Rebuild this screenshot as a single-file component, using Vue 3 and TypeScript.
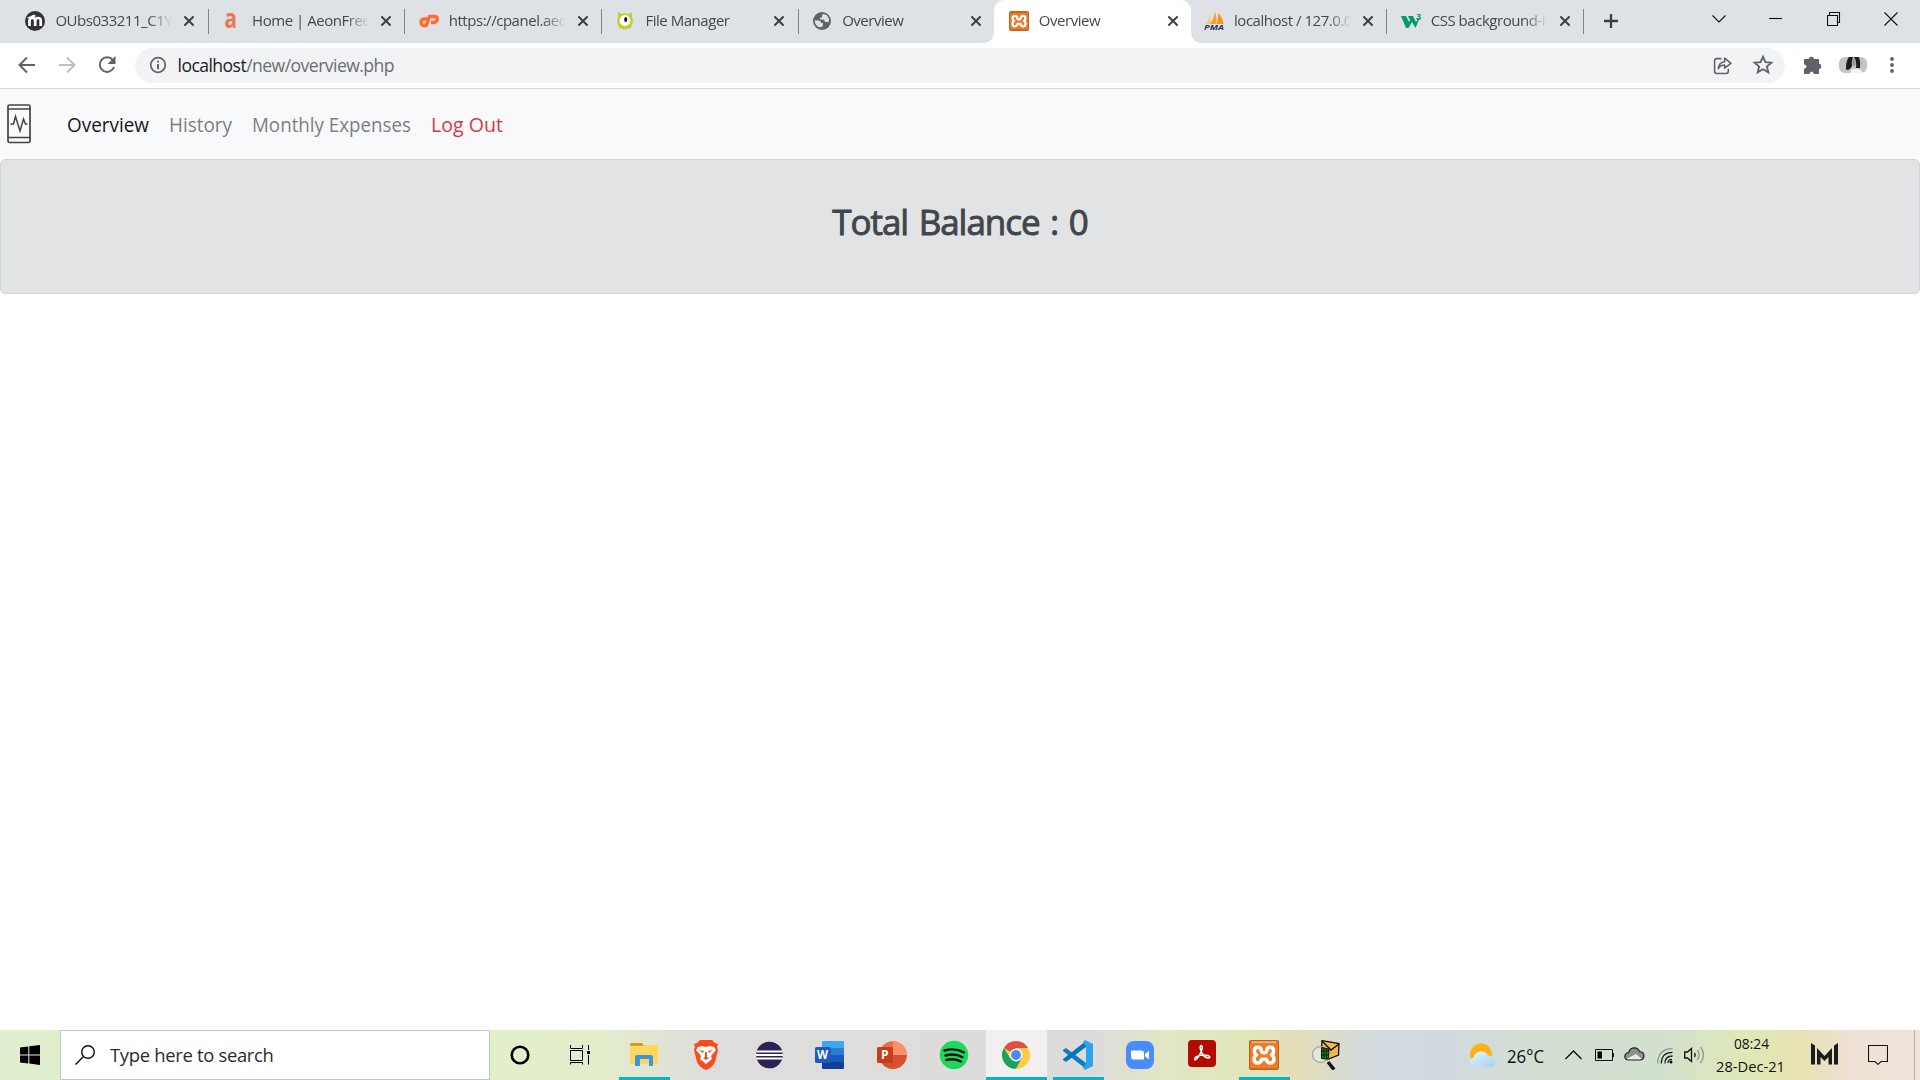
<script setup lang="ts">
interface Tab {
  title: string
  icon: string
  active?: boolean
  separator?: boolean
}

const tabs: Tab[] = [
  { title: 'OUbs033211_C1Y', icon: 'moodle', separator: true },
  { title: 'Home | AeonFree', icon: 'aeon', separator: true },
  { title: 'https://cpanel.aeo', icon: 'cpanel', separator: true },
  { title: 'File Manager', icon: 'monster', separator: true },
  { title: 'Overview', icon: 'globe' },
  { title: 'Overview', icon: 'xampp', active: true },
  { title: 'localhost / 127.0.0', icon: 'pma', separator: true },
  { title: 'CSS background-i', icon: 'w3', separator: true },
]

const links = [
  { label: 'Overview', kind: 'current', width: 82 },
  { label: 'History', kind: '', width: 63 },
  { label: 'Monthly Expenses', kind: '', width: 159 },
  { label: 'Log Out', kind: 'danger', width: 72 },
]
</script>

<template>
  <div class="screen">
    <header class="tabstrip">
      <div v-for="(tab, i) in tabs" :key="i" class="tab" :class="{ active: tab.active, sep: tab.separator }">
        <svg class="favicon" viewBox="0 0 20 20">
          <g v-if="tab.icon === 'moodle'">
            <circle cx="10" cy="10" r="10" fill="#333" />
            <path d="M4.500 15V9.500Q4.500 7 7.300 7T10.200 9.500V15M10.200 9.500Q10.200 7 13 7T15.700 9.500V15" fill="none" stroke="#fff" stroke-width="2.700" />
            <path d="M1.500 7L9 3.500L11 5L7 7.500Z" fill="#fff" />
          </g>
          <text v-else-if="tab.icon === 'aeon'" x="2.500" y="16.500" class="aeon" textLength="12.500" lengthAdjust="spacingAndGlyphs">a</text>
          <g v-else-if="tab.icon === 'cpanel'" fill="none" stroke="#ff6c2c" stroke-width="3.300" stroke-linejoin="round">
            <path d="M8.500 8H5.500Q2 8 2 11.300T5.500 14.500H7.500L10.500 5.500H15Q18.300 5.500 18.300 8.300T15 11.500H12" />
          </g>
          <g v-else-if="tab.icon === 'monster'">
            <path d="M3 1L6 3Q10 1.500 14 3L17 1V6Q19 10 16.500 15L15 18L13 17L11.500 19L10 17.500L8.500 19L7 17L5 18L3.500 15Q1 10 3 6Z" fill="#c3cf3a" />
            <circle cx="10" cy="9.500" r="5.400" fill="#fff" /><ellipse cx="10.700" cy="8.500" rx="1.500" ry="2.500" fill="#111" />
          </g>
          <g v-else-if="tab.icon === 'globe'">
            <circle cx="10" cy="10" r="9" fill="#5f6368" />
            <path d="M2.600 9.500H7Q9 9.500 9 12H11V15Q8 17.300 5.500 15.500Q2.800 13.500 2.600 9.500ZM11 3Q9 5 10.500 6.500H8V8.500H11Q13 9 13 11H16.800Q18 8 15.500 5Q13.500 3 11 3Z" fill="#dee1e6" />
          </g>
          <g v-else-if="tab.icon === 'xampp'">
            <rect width="20" height="20" rx="2" fill="#c8641d" /><rect x="1" y="2" width="18" height="16.500" rx="1" fill="#ee7a26" />
            <path d="M8.300 7.300Q8 4.800 6 4.800Q3.600 4.800 3.600 7.300Q3.600 9.200 5 10Q3.400 10.800 3.400 12.800Q3.400 15.300 6 15.300Q8 15.300 8.500 12.800H11.500Q12 15.300 14 15.300Q16.600 15.300 16.600 12.800Q16.600 10.800 15 10Q16.400 9.200 16.400 7.300Q16.400 4.800 14 4.800Q12 4.800 11.700 7.300Q11.500 8.500 10 8.500T8.300 7.300Z" fill="none" stroke="#fff" stroke-width="2.300" stroke-linejoin="round" />
          </g>
          <g v-else-if="tab.icon === 'pma'">
            <path d="M1 13Q5 10 5.500 3L7.500 13Z" fill="#fbc785" /><path d="M6 13Q10 8 11 0Q13 8 12.500 13Z" fill="#f8a13a" /><path d="M13 13L14.500 2Q19 8 19.500 13Z" fill="#f7931e" />
            <text x="0" y="19" class="pma" textLength="20" lengthAdjust="spacingAndGlyphs">PMA</text>
          </g>
          <g v-else>
            <path d="M0 5H5L8 11L9 9L7 5H12L15 11L16.500 9L15 7H18.500L17 11L14.500 17L11 11L7.500 17H5Z" fill="#059b6c" />
            <text x="15.500" y="9" class="three">3</text>
          </g>
        </svg>
        <span class="tab-title">{{ tab.title }}</span>
        <svg class="close" viewBox="0 0 10 10"><path d="M.4.4L9.600 9.600M9.600.4L.4 9.600" stroke="#3c4043" stroke-width="2" /></svg>
      </div>
      <svg class="plus" viewBox="0 0 14 14"><path d="M7 0V14M0 7H14" stroke="#3c4043" stroke-width="2.300" /></svg>
      <div class="window-controls">
        <svg viewBox="0 0 14 14"><path d="M.5 3.500L7 10L13.500 3.500" /></svg>
        <svg viewBox="0 0 14 14"><path d="M0 6.500H13" /></svg>
        <svg viewBox="0 0 14 14"><path d="M.5 3.500H10.500V13.500H.5ZM2.500 3.500V.5H12.500V10.500H10.500" /></svg>
        <svg viewBox="0 0 14 14"><path d="M.5.5L13.500 13.500M13.500.5L.5 13.500" /></svg>
      </div>
    </header>

    <div class="toolbar">
      <div class="history">
        <svg viewBox="0 0 18 18"><path d="M17 9H2M9 1.500L1.500 9L9 16.500" fill="none" stroke="#5f6368" stroke-width="2" /></svg>
        <svg viewBox="0 0 18 18"><path d="M1 9H16M9 1.500L16.500 9L9 16.500" fill="none" stroke="#bdbfc2" stroke-width="2" /></svg>
        <svg viewBox="0 0 18 18"><path d="M14.800 4A7.300 7.300 0 1 0 16 11" fill="none" stroke="#5f6368" stroke-width="2" /><path d="M17.500 0V8H9.500Z" fill="#5f6368" /></svg>
      </div>
      <div class="omnibox">
        <svg class="info" viewBox="0 0 18 18"><circle cx="9" cy="9" r="7.300" fill="none" stroke="#5f6368" stroke-width="1.700" /><path d="M9 4.700V6.600M9 8V13.300" stroke="#5f6368" stroke-width="1.900" /></svg>
        <span class="url"><b>localhost</b>/new/overview.php</span>
        <svg class="share" viewBox="0 0 18 18"><path d="M8 2.500H3.500Q1.500 2.500 1.500 4.500V14.500Q1.500 16.500 3.500 16.500H12.500Q14.500 16.500 14.500 14.500V12M5 12Q5.500 6 11 5.500V2L17 7L11 11.500V8.500Q7 8.500 5 12Z" fill="none" stroke="#5f6368" stroke-width="1.500" stroke-linejoin="round" /></svg>
        <svg class="star" viewBox="0 0 20 20"><path d="M10 2.500L12.200 7.400L17.600 7.900L13.500 11.400L14.800 16.700L10 13.900L5.200 16.700L6.500 11.400L2.400 7.900L7.800 7.400Z" fill="none" stroke="#5f6368" stroke-width="1.700" /></svg>
      </div>
      <svg class="puzzle" viewBox="0 0 20 20"><path d="M1.500 4.500H6A2.300 2.300 0 1 1 10.600 4.500H15.500V9A2.300 2.300 0 1 1 15.500 13.800V18.500H11A2.300 2.300 0 0 0 6.300 18.500H1.500V14A2.300 2.300 0 0 0 1.500 9.200Z" fill="#5f6368" stroke="#5f6368" stroke-linejoin="round" /></svg>
      <svg class="avatar" viewBox="0 0 28 16">
        <rect width="28" height="16" rx="6" fill="#c4c4c4" /><path d="M7 12Q7 3 10 0H14Q12 5 13 9Q11 13 8 13ZM15 0H20Q22 5 21 11L17 11Q18 5 15 0Z" fill="#1d1d1d" />
        <ellipse cx="14.800" cy="5" rx="1.800" ry="4" fill="#999" /><path d="M11 16Q12 11 16 12Q21 11 24 16Z" fill="#f2f2f2" />
      </svg>
      <svg class="dots" viewBox="0 0 4 16"><circle cx="2" cy="2" r="1.900" /><circle cx="2" cy="8" r="1.900" /><circle cx="2" cy="14" r="1.900" /></svg>
    </div>

    <nav class="navbar">
      <svg class="brand" viewBox="0 0 24 40">
        <rect x="1" y="1" width="22" height="37.500" rx="1.500" fill="none" stroke="#444" stroke-width="1.700" />
        <path d="M1 5H23M1 33.500H23" stroke="#444" stroke-width="1.300" />
        <path d="M3.500 20H6.500L8.500 12.500L13 27L16.500 15L18.500 20H20.500" fill="none" stroke="#444" stroke-width="1.500" />
      </svg>
      <svg v-for="link in links" :key="link.label" class="link" :class="link.kind" :width="link.width" height="30">
        <text x="0" y="23" :textLength="link.width" lengthAdjust="spacingAndGlyphs">{{ link.label }}</text>
      </svg>
    </nav>

    <section class="balance">
      <h1>Total Balance : 0</h1>
    </section>

    <main class="page"></main>

    <footer class="taskbar">
      <div class="start"><svg width="20" height="20" viewBox="0 0 20 20"><path d="M0 2.600L8.300 1.500V9.500H0ZM9.300 1.300L20 0V9.500H9.300ZM0 10.500H8.300V18.500L0 17.400ZM9.300 10.500H20V20L9.300 18.600Z" /></svg></div>
      <div class="search">
        <svg width="20" height="20" viewBox="0 0 20 20"><circle cx="13" cy="7" r="6.300" fill="none" stroke="#111" stroke-width="1.400" /><path d="M8.500 11.500L.5 19.500" stroke="#111" stroke-width="1.400" /></svg>
        <span>Type here to search</span>
      </div>
      <div class="cell cortana"><svg width="20" height="20" viewBox="0 0 20 20"><circle cx="10" cy="10" r="8.300" fill="none" stroke="#000" stroke-width="2.600" /></svg></div>
      <div class="cell taskview"><svg width="20" height="20" viewBox="0 0 20 20"><path d="M.5 0V3.500H12.500V0M.5 5.500H12.500V15.500H.5ZM.5 19.500V17.500H12.500V19.500M18.500 0V5M18.500 10V19.500" fill="none" stroke="#000" stroke-width="1" /><path d="M17 6H20V9H17Z" /></svg></div>

      <div class="cell running">
        <svg width="28" height="26" viewBox="0 0 28 26"><path d="M0 3Q0 1 1 1H12L14 4H0Z" fill="#dc9b00" /><path d="M0 5H12L15 3H27Q28 3 28 4V22H0Z" fill="#ffd65c" /><path d="M5 24V15Q5 13 7 13H21Q23 13 23 15V24H19V17H10V24Z" fill="#3996dc" /></svg>
      </div>
      <div class="cell">
        <svg width="26" height="30" viewBox="0 0 26 30"><path d="M7 0H19L22 3L25 4L24 7L25 10L22 22Q20 27 13 30Q6 27 4 22L1 10L2 7L1 4L4 3Z" fill="#fb4a1b" /><path d="M5 7L9 6L13 7L17 6L21 7L23 10L18 16L19 19L13 24L7 19L8 16L3 10Z" fill="#fff" /><path d="M6 10L11 11L10 13ZM20 10L15 11L16 13ZM12 12H14L14 17L16 18L13 20L10 18L12 17Z" fill="#fb4a1b" /></svg>
      </div>
      <div class="cell">
        <svg width="30" height="28" viewBox="0 0 30 28"><path d="M17 .5A13.500 13.500 0 0 0 17 27.500Q5 24 5 14T17 .5Z" fill="#f7941e" /><circle cx="16.500" cy="14" r="13.300" fill="#2c2255" /><path d="M3.400 10.500H29.600M3 14H30M3.400 17.500H29.600" stroke="#fff" stroke-width="2.100" /></svg>
      </div>
      <div class="cell">
        <svg width="30" height="28" viewBox="0 0 30 28"><path d="M8 0H28Q29 0 29 1V7H7V1Z" fill="#41a5ee" /><path d="M7 7H29V14H7Z" fill="#2b7cd3" /><path d="M7 14H29V21H7Z" fill="#185abd" /><path d="M7 21H29V27Q29 28 28 28H8Q7 28 7 27Z" fill="#103f91" /><rect x="0" y="6" width="16" height="16" rx="1.500" fill="#1c5cc0" /><text x="2" y="18" class="office" textLength="11" lengthAdjust="spacingAndGlyphs">W</text></svg>
      </div>
      <div class="cell">
        <svg width="30" height="28" viewBox="0 0 30 28"><circle cx="16" cy="14" r="13.800" fill="#ed6c47" /><path d="M16 .2A13.800 13.800 0 0 1 29.800 14H16Z" fill="#ff8f6b" /><path d="M29.800 14A13.800 13.800 0 0 1 4 21L16 14Z" fill="#d35230" /><rect x="0" y="6" width="16" height="16" rx="1.500" fill="#c43e1c" /><text x="4" y="18" class="office">P</text></svg>
      </div>
      <div class="cell">
        <svg width="30" height="30" viewBox="0 0 30 30"><circle cx="15" cy="15" r="14.300" fill="#1ed760" /><path d="M5.500 10.500Q16 7.500 25 12.500M6.500 15.500Q16 13 23.500 17.200M7.500 20Q15 18 22 21.500" fill="none" stroke="#111" stroke-width="2.400" stroke-linecap="round" /></svg>
      </div>
      <div class="cell running focused">
        <svg width="28" height="28" viewBox="0 0 28 28"><circle cx="14" cy="14" r="13.800" fill="#ffcd40" /><path d="M14 14L2 7A13.800 13.800 0 0 1 26 7H14Z" fill="#dd5144" /><path d="M2 7A13.800 13.800 0 0 0 14 27.800L20 17L14 14L8 17Z" fill="#1aa260" /><path d="M14 27.800L20 17A7 7 0 0 0 20 8H26.500A13.800 13.800 0 0 1 14 27.800Z" fill="#ffcd40" /><circle cx="14" cy="14" r="6.500" fill="#f5f5f5" /><circle cx="14" cy="14" r="5" fill="#4c8bf5" /></svg>
      </div>
      <div class="cell running">
        <svg width="30" height="30" viewBox="0 0 30 30"><path d="M0 10L3 8L23 23V29L0 11Z" fill="#0d7dc4" /><path d="M0 20L3 22L23 7V1L0 19Z" fill="#0876b9" /><path d="M22 0L30 4V26L22 30L20 28L23 23V7L20 2Z" fill="#2aa4ee" /></svg>
      </div>
      <div class="cell">
        <svg width="28" height="28" viewBox="0 0 28 28"><rect width="28" height="28" rx="8" fill="#4a8cff" /><path d="M5 9.500H15Q18 9.500 18 12V18.500H8Q5 18.500 5 16ZM19 13L23 9.800V18.200L19 15.500Z" fill="#fff" /></svg>
      </div>
      <div class="cell acrobat">
        <svg width="28" height="27" viewBox="0 0 28 27"><rect width="28" height="27" rx="4" fill="#b30b00" /><path d="M7 20Q5.500 18.500 9 16.500Q14 14 20 15.500Q23 17 21 18Q17 18.500 13.500 12.500Q11 6 13 5.500Q15.500 6 13 12Q9.500 19.500 7 20Z" fill="none" stroke="#fff" stroke-width="1.500" /></svg>
      </div>
      <div class="cell running">
        <svg width="30" height="30" viewBox="0 0 20 20"><rect width="20" height="20" rx="1.500" fill="#bd5c1d" /><rect x=".7" y="1.500" width="18.600" height="17.500" rx="1" fill="#f47b25" /><rect x="1.500" y=".8" width="17" height="1.200" fill="#f3b48a" /><path d="M8.300 7.300Q8 4.800 6 4.800Q3.600 4.800 3.600 7.300Q3.600 9.200 5 10Q3.400 10.800 3.400 12.800Q3.400 15.300 6 15.300Q8 15.300 8.500 12.800H11.500Q12 15.300 14 15.300Q16.600 15.300 16.600 12.800Q16.600 10.800 15 10Q16.400 9.200 16.400 7.300Q16.400 4.800 14 4.800Q12 4.800 11.700 7.300Q11.500 8.500 10 8.500T8.300 7.300Z" fill="none" stroke="#fff" stroke-width="2.300" stroke-linejoin="round" /></svg>
      </div>
      <div class="cell">
        <svg width="28" height="30" viewBox="0 0 28 30"><path d="M10 .7L27 3.500L26.500 15L14 20L9 17Z" fill="#efb850" stroke="#111" stroke-width="1.300" /><path d="M10 1L19 10L27 4" fill="none" stroke="#111" stroke-width="1.400" /><circle cx="8.500" cy="14.500" r="8" fill="#e3e8d8" stroke="#a9aba3" stroke-width="1.300" /><path d="M9.500 7.500L17 9L16.500 18L14 19L9.500 18.500Z" fill="#0c8a1c" stroke="#111" /><path d="M12 8V18.500M14.500 9V18.500M9.500 11H17M9.500 15H17" stroke="#111" stroke-width=".9" /><path d="M16 22L22 29.500" stroke="#111" stroke-width="3.500" /></svg>
      </div>

      <div class="tray">
        <svg class="weather" width="27" height="24" viewBox="0 0 27 24"><defs><linearGradient id="cloud" x1="0" y1="0" x2="1" y2="1"><stop stop-color="#e4f6ff" /><stop offset="1" stop-color="#a5d0ef" /></linearGradient></defs><circle cx="12" cy="11.500" r="11" fill="#fbb217" /><path d="M6 24Q0 24 .5 19Q1 15 4.500 14.500Q6 8.500 12 8.500Q17 8.500 19 12.500Q26 12 26.500 18Q26.500 24 21 24Z" fill="url(#cloud)" /></svg>
        <svg class="temp" width="38" height="26"><text x="0" y="19" textLength="37" lengthAdjust="spacingAndGlyphs">26°C</text></svg>
        <svg class="up" width="17" height="10" viewBox="0 0 17 10"><path d="M.5 9L8.500 1L16.500 9" fill="none" stroke="#111" stroke-width="1.400" /></svg>
        <svg class="battery" width="20" height="12" viewBox="0 0 20 12"><path d="M.5.5H17.500V11.500H.5ZM18.500 4V8" fill="none" stroke="#111" stroke-width="1" /><path d="M2.500 2.500H7V9.500H2.500Z" /></svg>
        <svg class="cloud" width="21" height="14" viewBox="0 0 21 14"><path d="M4.500 13Q1 13 .8 9.500Q1 6 4.500 5.500Q6 .8 10.500 .8Q14 .8 15.500 4.500Q20 5 20 9Q19.500 13 16 13Z" fill="#8d8f8d" /><path d="M2 12L12 7L18 12L16 13H4.500Z" fill="#e8ebe8" /><path d="M4.500 13Q1 13 .8 9.500Q1 6 4.500 5.500Q6 .8 10.500 .8Q14 .8 15.500 4.500Q20 5 20 9Q19.500 13 16 13Z" fill="none" stroke="#222" stroke-width="1.200" /></svg>
        <svg class="wifi" width="16" height="16" viewBox="0 0 16 16" fill="none"><path d="M.7 15.500Q.7 1 15.500.7" stroke="#8f958a" stroke-width="1.200" /><path d="M4.300 15.500Q4.300 4.500 15.500 4.300M8 15.500Q8 8 15.500 8" stroke="#222" stroke-width="1.300" /><path d="M11 15Q11 11.500 15 11.300" stroke="#222" stroke-width="1.300" /><circle cx="14" cy="14" r="1.500" fill="#111" /></svg>
        <svg class="speaker" width="21" height="18" viewBox="0 0 21 18" fill="none"><path d="M.7 6H3.500L7.500 2.500V15.500L3.500 12H.7ZM10.500 7Q12 9 10.500 11" stroke="#111" stroke-width="1.300" /><path d="M13.300 4Q17 9 13.300 14M16.500 1Q22.500 9 16.500 17" stroke="#929c80" stroke-width="1.300" /></svg>
        <svg class="clock" width="70" height="44">
          <text x="18" y="18" textLength="35" lengthAdjust="spacingAndGlyphs">08:24</text>
          <text x="0" y="41" textLength="69" lengthAdjust="spacingAndGlyphs">28-Dec-21</text>
        </svg>
        <svg class="im" width="27" height="22" viewBox="0 0 27 22"><path d="M0 0L4 2.500V21.500H0ZM27 0L23 2.500V21.500H27ZM6 21.500V5L13.500 13L21 5V21.500H17.500V14L13.500 18L9.500 14V21.500Z" fill="#1c1c1c" /></svg>
        <svg class="note" width="20" height="20" viewBox="0 0 20 20"><path d="M.5.5H19.500V16.500H13L10 19.300L7 16.500H.5Z" fill="none" stroke="#111" stroke-width="1.100" /></svg>
      </div>
    </footer>
  </div>
</template>

<style>
html, body { margin: 0; overflow: hidden; background: #fff; }
</style>

<style scoped>
.screen { width: 1920px; height: 1080px; display: flex; flex-direction: column; font-family: "Open Sans", "Noto Sans", sans-serif; overflow: hidden; }
svg { display: block; flex: none; }
.tabstrip { height: 43px; background: #dee1e6; display: flex; align-items: center; padding-left: 12px; box-sizing: border-box; flex: none; }
.tab { position: relative; width: 196.700px; height: 43px; box-sizing: border-box; padding-left: 13.400px; display: flex; align-items: center; flex: none; }
.tab.sep::after { content: ""; position: absolute; right: 0; top: 9px; width: 1px; height: 25px; background: #80868b; }
.tab.active { background: #fff; border-radius: 10px 10px 0 0; margin: 0 1.500px 0 -1.500px; padding-left: 14.900px; }
.tab.active::before, .tab.active::after { content: ""; position: absolute; bottom: 0; width: 10px; height: 10px; }
.tab.active::before { left: -10px; background: radial-gradient(circle at 0 0, transparent 9.500px, #fff 10px); }
.tab.active::after { right: -10px; background: radial-gradient(circle at 100% 0, transparent 9.500px, #fff 10px); }
.tab.active + .tab { margin-left: -1.500px; }
.favicon { width: 20px; height: 20px; margin-top: -1px; overflow: visible; }
.aeon { font: 700 26px "Open Sans", sans-serif; fill: #ef7350; }
.pma { font: italic 700 7px "Open Sans", sans-serif; fill: #333366; }
.three { font: 700 8px "Open Sans", sans-serif; fill: #059b6c; }
.tab-title { margin-left: 10px; width: 117px; overflow: hidden; white-space: nowrap; font-size: 15px; letter-spacing: -.47px; line-height: 24px; margin-top: -3px; color: #45494d; -webkit-mask-image: linear-gradient(90deg, #000 80%, transparent); mask-image: linear-gradient(90deg, #000 80%, transparent); }
.close { width: 10px; height: 10px; margin-left: 12px; margin-top: -1px; }
.plus { width: 14px; height: 14px; margin-left: 19.500px; margin-top: -1px; }
.window-controls { margin-left: auto; margin-right: 22px; margin-top: -6px; display: flex; gap: 43.300px; }
.window-controls svg { width: 14px; height: 14px; fill: none; stroke: #111; stroke-width: 1.100; }

.toolbar { height: 46px; box-sizing: border-box; border-bottom: 1px solid #d9dadc; display: flex; align-items: center; padding: 0 0 2px 18px; background: #fff; flex: none; }
.history { display: flex; gap: 22px; width: 117px; }
.history svg { width: 18px; height: 18px; margin-top: 1px; }
.omnibox { width: 1650px; height: 35px; border-radius: 18px; background: #f1f3f4; display: flex; align-items: center; box-sizing: border-box; padding-left: 13.500px; margin-top: 1px; }
.info { width: 18px; height: 18px; }
.url { margin-left: 11px; font-size: 17.600px; letter-spacing: -.56px; color: #6a6e72; line-height: 30px; margin-top: 0; }
.url b { font-weight: 400; color: #202124; }
.share { width: 19px; height: 19px; margin-left: auto; }
.star { width: 22px; height: 22px; margin: 0 11px 0 20px; }
.puzzle { width: 20px; height: 20px; margin-left: 18px; }
.avatar { width: 28px; height: 16px; margin-left: 16px; }
.dots { width: 4px; height: 16px; margin-left: 23px; fill: #5f6368; }

.navbar { height: 70px; background: #f8f9fa; display: flex; align-items: center; gap: 20px; flex: none; padding-left: 7px; box-sizing: border-box; }
.brand { width: 24px; height: 40px; margin-right: 16px; }
.link { overflow: visible; font-size: 19.800px; fill: #7d7e7f; }
.link.current { fill: #171717; }
.link.danger { fill: #dc3545; }
.balance { height: 135px; box-sizing: border-box; border: 1px solid #d3d6d8; border-radius: 5px; background: #e2e3e5; display: flex; justify-content: center; flex: none; }
h1 { margin: 37px 0 0; font-size: 35px; font-weight: 400; -webkit-text-stroke: .9px #41464b; line-height: 50px; letter-spacing: -1.050px; word-spacing: 2.500px; color: #41464b; white-space: nowrap; }
.page { flex: 1; }

.taskbar { height: 50px; flex: none; display: flex; background: linear-gradient(90deg, #dfeecd 0, #e3eecb 500px, #e3edcb 600px, #dfdddb 700px, #dedcda 1100px, #e1e6c5 1160px, #e1e7bc 1230px, #e4deb8 1295px, #d2dbe0 1375px, #d1dae0 1440px, #d3dfd1 1540px, #d2e0cf 1660px, #dfe8b5 1750px, #e6e1b2 1800px, #eee0d4 1850px, #efe3d9 1910px); }
.start { width: 60px; display: flex; align-items: center; justify-content: center; }
.search { width: 430px; box-sizing: border-box; border: 1px solid #c5c7c5; background: #fff; display: flex; align-items: center; padding-left: 14px; }
.search span { margin-left: 15px; font-size: 18.400px; letter-spacing: -.3px; color: #2b2b2b; line-height: 30px; white-space: nowrap; }
.cell { width: 62px; height: 50px; display: flex; align-items: center; justify-content: center; position: relative; flex: none; }
.cortana { width: 60px; }
.taskview { width: 63px; padding-right: 3px; box-sizing: border-box; }
.running::after { content: ""; position: absolute; left: 6px; bottom: 0; width: 51px; height: 3px; background: #00b7c3; }
.focused { background: linear-gradient(90deg, transparent 1px, #f1f0ef 1px); }
.focused::after { left: 1px; width: 61px; }
.acrobat { padding-bottom: 3px; box-sizing: border-box; }
.office { font: 700 12px "Open Sans", sans-serif; fill: #fff; }
.tray { margin-left: 112px; width: 446px; box-sizing: border-box; border-right: 1px solid #b9b2a8; display: flex; align-items: center; flex: none; }
.temp { margin-left: 11px; font-size: 17.500px; fill: #111; margin-top: 3px; }
.up { margin-left: 20px; }
.battery { margin-left: 13px; }
.cloud { margin-left: 9px; margin-top: -2px; }
.wifi { margin-left: 12px; margin-top: 2px; }
.speaker { margin-left: 11px; }
.clock { margin-left: 11px; font-size: 15px; fill: #111; margin-top: -4px; }
.im { margin-left: 25px; margin-top: -3px; }
.note { margin-left: 30px; }
</style>
